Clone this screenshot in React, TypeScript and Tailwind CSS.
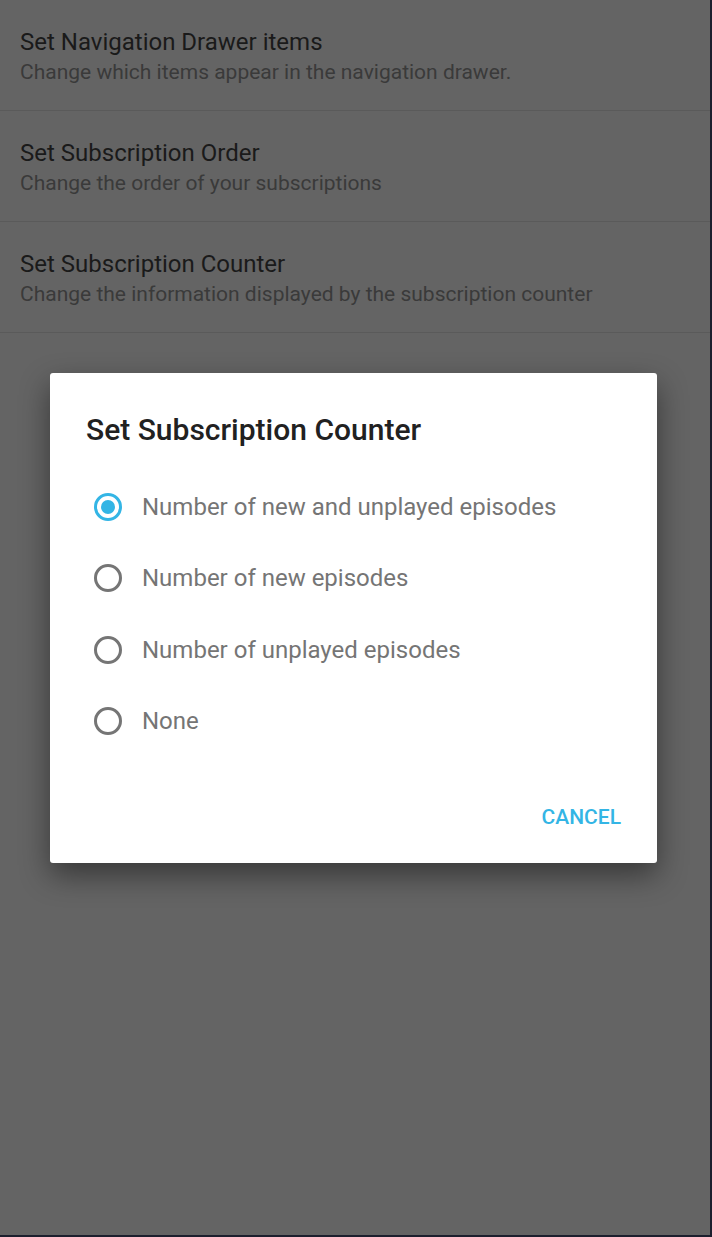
import React from "react";

const rows = [
  { t: "Set Navigation Drawer items", s: "Change which items appear in the navigation drawer." },
  { t: "Set Subscription Order", s: "Change the order of your subscriptions" },
  { t: "Set Subscription Counter", s: "Change the information displayed by the subscription counter" },
];

const options = [
  "Number of new and unplayed episodes",
  "Number of new episodes",
  "Number of unplayed episodes",
  "None",
];

function Radio({ checked }: { checked: boolean }) {
  return (
    <svg width="30" height="30" viewBox="0 0 30 30">
      <circle cx="15" cy="15" r="12.5" fill="none" stroke={checked ? "#33b5e5" : "#757575"} strokeWidth="3" />
      {checked && <circle cx="15" cy="15" r="7" fill="#33b5e5" />}
    </svg>
  );
}

export default function App() {
  return (
    <div
      className="w-[712px] h-[1237px] bg-[#646464] border-r-2 border-b-2 border-[#1c1f2e] flex flex-col overflow-hidden"
      style={{ fontFamily: "Roboto, 'Noto Sans', sans-serif" }}
    >
      {rows.map((r) => (
        <div key={r.t} className="h-[111px] border-b border-[#5a5a5a] pl-5 pt-[27px] flex flex-col">
          <div className="text-[24px] leading-[30px] text-[#1a1a1a] whitespace-nowrap">{r.t}</div>
          <div className="text-[21px] leading-[30px] text-[#3a3a3a] whitespace-nowrap">{r.s}</div>
        </div>
      ))}
      <div className="ml-[50px] mt-[40px] w-[607px] h-[490px] bg-white rounded-[3px] shadow-[0_12px_30px_rgba(0,0,0,0.45)] flex flex-col">
        <div className="pl-9 pt-[39px] text-[30px] leading-[36px] font-medium text-[#212121] whitespace-nowrap">Set Subscription Counter</div>
        <div className="flex flex-col pt-[23px]">
          {options.map((o, i) => (
            <div key={o} className="h-[71.5px] flex items-center pl-[43px] gap-[19px]">
              <Radio checked={i === 0} />
              <span className="text-[24px] text-[#757575] whitespace-nowrap">{o}</span>
            </div>
          ))}
        </div>
        <div className="flex justify-end pr-9 pt-[45px]">
          <span className="text-[21px] font-medium text-[#33b5e5]">CANCEL</span>
        </div>
      </div>
    </div>
  );
}
